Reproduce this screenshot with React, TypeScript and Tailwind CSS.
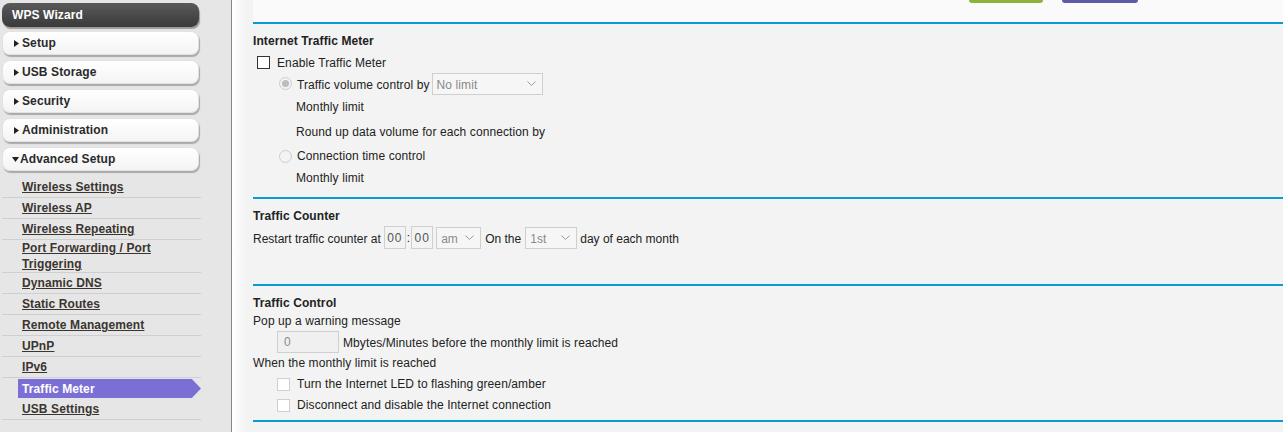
import type { ReactNode } from 'react';

const menu = ['Setup', 'USB Storage', 'Security', 'Administration'];

const subItems: { label: ReactNode; h: string; active?: boolean }[] = [
  { label: 'Wireless Settings', h: 'h-[21px]' },
  { label: 'Wireless AP', h: 'h-[21px]' },
  { label: 'Wireless Repeating', h: 'h-[21px]' },
  { label: <>Port Forwarding / Port<br />Triggering</>, h: 'h-[33px]' },
  { label: 'Dynamic DNS', h: 'h-[21px]' },
  { label: 'Static Routes', h: 'h-[21px]' },
  { label: 'Remote Management', h: 'h-[21px]' },
  { label: 'UPnP', h: 'h-[21px]' },
  { label: 'IPv6', h: 'h-[21px]' },
  { label: 'Traffic Meter', h: 'h-[21px]', active: true },
  { label: 'USB Settings', h: 'h-[21px]' },
];

function Arrow({ down }: { down?: boolean }) {
  return down ? (
    <svg width="7" height="5" viewBox="0 0 7 5" className="mr-[1px]">
      <path d="M0 0 L7 0 L3.5 5 Z" fill="#222" />
    </svg>
  ) : (
    <svg width="5" height="7" viewBox="0 0 5 7" className="mr-[3px]">
      <path d="M0 0 L5 3.5 L0 7 Z" fill="#222" />
    </svg>
  );
}

function Chevron() {
  return (
    <svg width="9" height="5" viewBox="0 0 9 5">
      <path d="M0.5 0.5 L4.5 4.5 L8.5 0.5" fill="none" stroke="#9a9a9a" strokeWidth="1" />
    </svg>
  );
}

function Select({ value, w }: { value: string; w: string }) {
  return (
    <div className={`${w} h-[22px] border border-[#cfcfcf] bg-[#f6f6f6] flex items-center justify-between pl-[4px] pr-[6px] text-[#8a8a8a]`}>
      <span className="mt-[2px]">{value}</span>
      <Chevron />
    </div>
  );
}

function Radio({ checked }: { checked?: boolean }) {
  return (
    <span className="w-[13px] h-[13px] rounded-full border border-[#cdcdcd] bg-[#f3f3f3] flex items-center justify-center">
      {checked && <span className="w-[7px] h-[7px] rounded-full bg-[#bcbcbc]" />}
    </span>
  );
}

function Box({ dark }: { dark?: boolean }) {
  return (
    <span className={`w-[13px] h-[13px] bg-white border ${dark ? 'border-[#333]' : 'border-[#cfcfcf]'}`} />
  );
}

function BlueLine() {
  return <div className="h-[2px] bg-[#0a9bd0]" />;
}

export default function App() {
  return (
    <div className="w-[1283px] h-[432px] overflow-hidden flex font-['Liberation_Sans',Arial,sans-serif] text-[12px] tracking-[0.1px] text-[#222]">
      {/* Sidebar */}
      <div className="w-[232px] shrink-0 bg-[#e6e6e6] border-r border-[#878787] pt-[3px]">
        <div className="ml-[2px] w-[197px] flex flex-col gap-[5px]">
          <div className="h-[24px] -mb-[1px] rounded-[8px] bg-gradient-to-b from-[#5a5a5a] to-[#3a3a3a] shadow-[1px_2px_1px_#9a9a9a] flex items-center pl-[10px] text-white font-bold">
            WPS Wizard
          </div>
          {menu.map(m => (
            <div
              key={m}
              className="h-[24px] rounded-[8px] bg-gradient-to-b from-white to-[#f4f4f4] border border-[#e2e2e2] shadow-[1px_2px_1px_#a9a9a9] flex items-center pl-[11px] font-bold text-[#2a2a2a]"
            >
              <Arrow />
              {m}
            </div>
          ))}
          <div className="h-[24px] rounded-[8px] bg-gradient-to-b from-white to-[#f4f4f4] border border-[#e2e2e2] shadow-[1px_2px_1px_#a9a9a9] flex items-center pl-[9px] font-bold text-[#2a2a2a]">
            <Arrow down />
            Advanced Setup
          </div>
        </div>

        <div className="mt-[6px] ml-[2px] w-[199px]">
          {subItems.map((s, i) =>
            s.active ? (
              <div key={i} className="h-[21px] flex items-center">
                <div className="ml-[16px] w-[184px] h-[19px] bg-[#7b6fd6] [clip-path:polygon(0_0,95%_0,100%_50%,95%_100%,0_100%)] flex items-center pl-[4px] font-bold text-white">
                  {s.label}
                </div>
              </div>
            ) : (
              <div
                key={i}
                className={`${s.h} border-b border-[#cfcfcf] flex items-center pl-[20px] font-bold text-[#3a3530] underline underline-offset-[1px] leading-[16px]`}
              >
                <span>{s.label}</span>
              </div>
            )
          )}
        </div>
      </div>

      {/* Left shadow strip */}
      <div className="w-[13px] shrink-0 bg-gradient-to-r from-white to-[#f4f4f4]" />

      {/* Content */}
      <div className="flex-1 bg-[#f3f3f3] pl-[8px]">
        <div className="h-[22px] bg-[#fafafa] flex items-start">
          <div className="ml-[716px] w-[74px] h-[3px] bg-[#8bb43c] rounded-b-[3px]" />
          <div className="ml-[19px] w-[76px] h-[3px] bg-[#5f5aa6] rounded-b-[3px]" />
        </div>
        <BlueLine />

        {/* Internet Traffic Meter */}
        <div className="pt-[6px] pb-[9px]">
          <div className="h-[20px] pt-[2px] flex items-center font-bold">Internet Traffic Meter</div>
          <div className="h-[23px] pt-[2px] flex items-center pl-[4px] gap-[7px]">
            <Box dark />
            <span>Enable Traffic Meter</span>
          </div>
          <div className="h-[21px] flex items-center pl-[26px]">
            <Radio checked />
            <span className="ml-[5px] mr-[2px] mt-[2px]">Traffic volume control by</span>
            <Select value="No limit" w="w-[111px]" />
          </div>
          <div className="h-[24px] pt-[2px] flex items-center pl-[43px]">Monthly limit</div>
          <div className="h-[26px] pt-[2px] flex items-center pl-[43px]">Round up data volume for each connection by</div>
          <div className="h-[22px] pt-[2px] flex items-center pl-[26px]">
            <Radio />
            <span className="ml-[5px]">Connection time control</span>
          </div>
          <div className="h-[22px] pt-[2px] flex items-center pl-[43px]">Monthly limit</div>
        </div>
        <BlueLine />

        {/* Traffic Counter */}
        <div className="pt-[6px] pb-[34px]">
          <div className="h-[20px] pt-[2px] flex items-center font-bold">Traffic Counter</div>
          <div className="h-[25px] flex items-center tracking-normal">
            <span className="mr-[3px] mt-[2px]">Restart traffic counter at</span>
            <div className="w-[22px] h-[23px] border border-[#cfcfcf] flex items-center justify-center text-[#555] tracking-[1px]">00</div>
            <span className="mx-[1px]">:</span>
            <div className="w-[22px] h-[23px] border border-[#cfcfcf] flex items-center justify-center text-[#555] tracking-[1px]">00</div>
            <div className="ml-[3px]">
              <Select value="am" w="w-[45px]" />
            </div>
            <span className="ml-[4px] mr-[4px] mt-[2px]">On the</span>
            <Select value="1st" w="w-[52px]" />
            <span className="ml-[3px] mt-[2px]">day of each month</span>
          </div>
        </div>
        <BlueLine />

        {/* Traffic Control */}
        <div className="pt-[6px] pb-[8px]">
          <div className="h-[19px] pt-[2px] flex items-center font-bold">Traffic Control</div>
          <div className="h-[18px] pt-[2px] flex items-center">Pop up a warning message</div>
          <div className="h-[25px] flex items-center pl-[24px]">
            <div className="w-[62px] h-[22px] border border-[#cfcfcf] bg-[#f0f0f0] flex items-center pl-[6px] text-[#8a8a8a]">0</div>
            <span className="ml-[4px] mt-[2px]">Mbytes/Minutes before the monthly limit is reached</span>
          </div>
          <div className="h-[16px] pt-[2px] flex items-center">When the monthly limit is reached</div>
          <div className="h-[26px] pt-[2px] flex items-center pl-[24px] gap-[7px]">
            <Box />
            <span>Turn the Internet LED to flashing green/amber</span>
          </div>
          <div className="h-[16px] pt-[2px] flex items-center pl-[24px] gap-[7px]">
            <Box />
            <span>Disconnect and disable the Internet connection</span>
          </div>
        </div>
        <BlueLine />
      </div>
    </div>
  );
}
